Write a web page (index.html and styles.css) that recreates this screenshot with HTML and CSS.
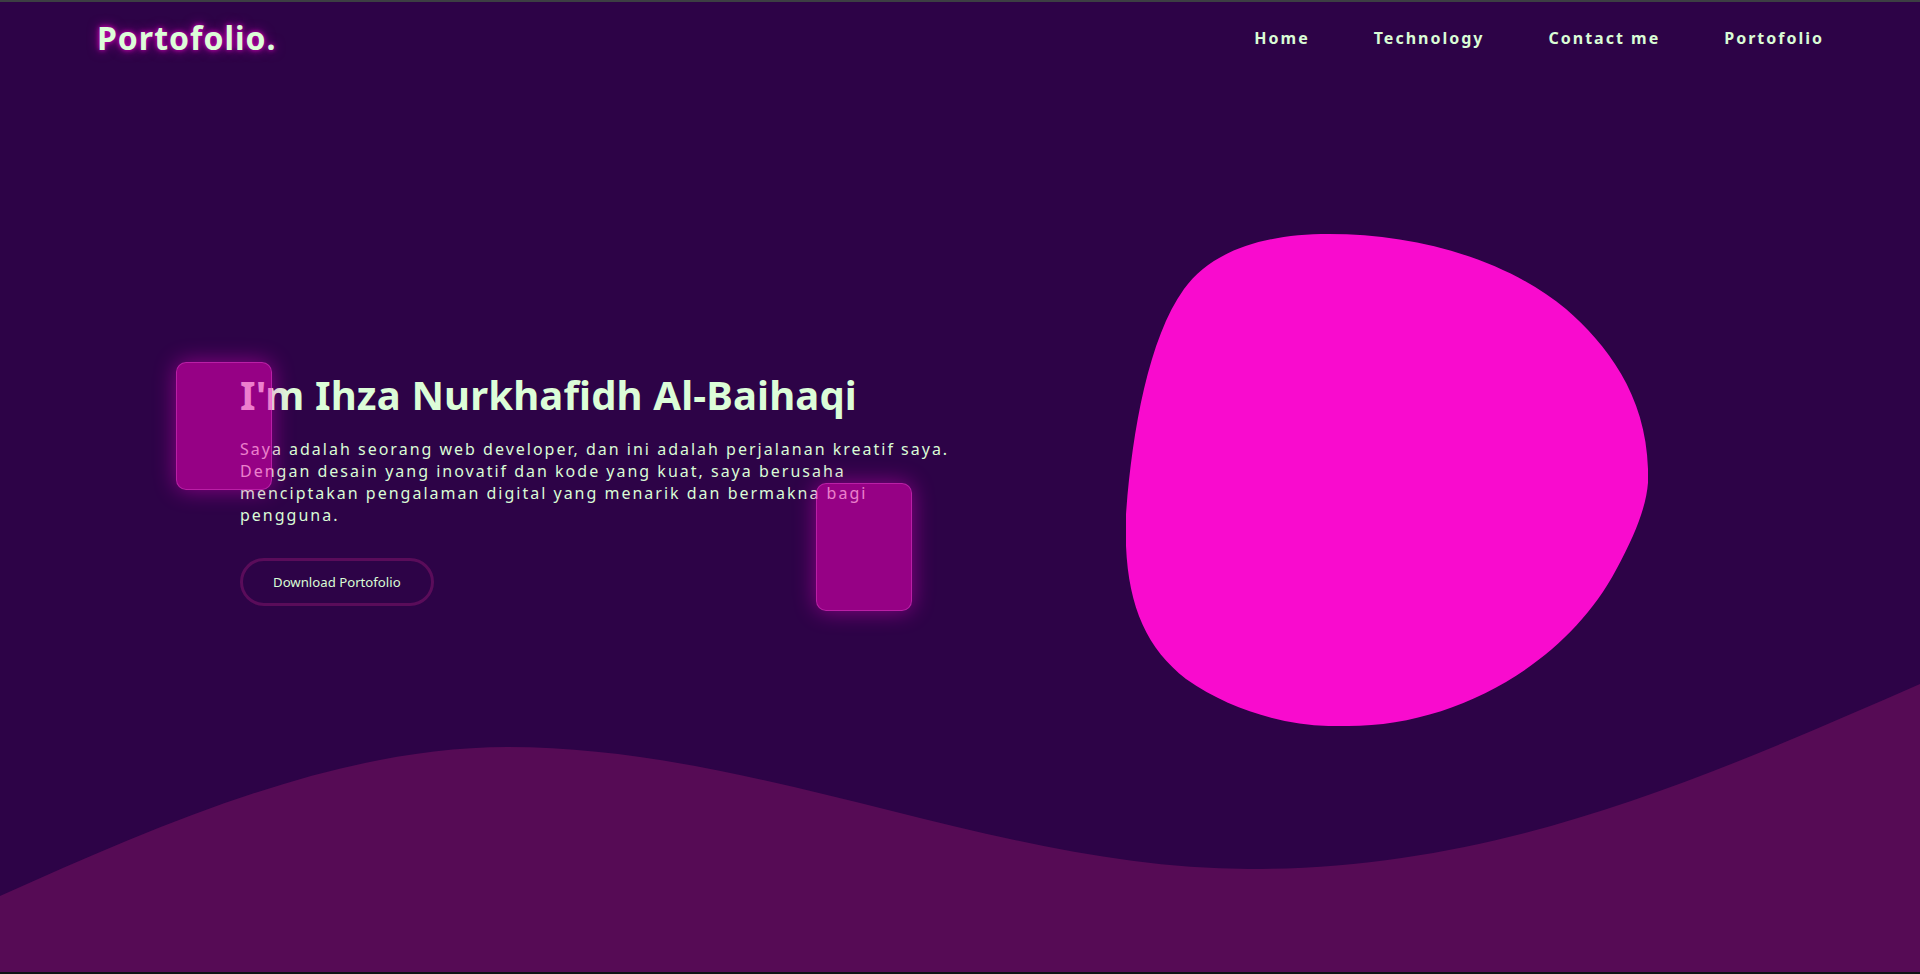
FILE: index.html
```
<!DOCTYPE html>
<html lang="id">
<head>
<meta charset="utf-8">
<title>Portofolio</title>
<link rel="stylesheet" href="styles.css">
</head>
<body>
<div class="page">
  <svg class="wave" viewBox="0 0 1920 292" preserveAspectRatio="none" aria-hidden="true">
    <path d="M0 216 C170 140 340 67 508 67 C760 67 1000 189 1249 189 C1500 189 1700 100 1920 4 L1920 292 L0 292 Z" fill="#560b55"/>
  </svg>
  <header class="header">
    <div class="logo">Portofolio.</div>
    <nav class="nav">
      <a href="#">Home</a>
      <a href="#">Technology</a>
      <a href="#">Contact me</a>
      <a href="#">Portofolio</a>
    </nav>
  </header>
  <section class="hero">
    <div class="hero-text">
      <div class="glass glass-a"></div>
      <div class="glass glass-b"></div>
      <h1 class="title">I'm Ihza Nurkhafidh Al-Baihaqi</h1>
      <p class="intro">Saya adalah seorang web developer, dan ini adalah perjalanan kreatif saya. Dengan desain yang inovatif dan kode yang kuat, saya berusaha menciptakan pengalaman digital yang menarik dan bermakna bagi pengguna.</p>
      <a class="btn" href="#">Download Portofolio</a>
    </div>
    <div class="hero-visual">
      <svg class="blob" viewBox="0 0 522 492" aria-hidden="true">
        <path d="M203 0 C135 0 85 18 58 55 C22 105 6 200 0 280 C-3 360 15 410 60 445 C110 480 170 494 222 492 C330 492 440 430 490 336 C515 290 524 260 522 235 C520 160 480 110 440 75 C380 25 290 0 203 0 Z" fill="#f90bce"/>
      </svg>
    </div>
  </section>
</div>
</body>
</html>
```
FILE: styles.css
```
html {
  background: #101215;
}
body {
  margin: 0;
  font-family: "Noto Sans", "Open Sans", sans-serif;
  color: #dafcd6;
}
.page {
  position: relative;
  height: 970px;
  border-top: 2px solid #3c3f43;
  background: #2d0347;
  overflow: hidden;
}
.wave {
  position: absolute;
  left: 0;
  bottom: 0;
  width: 100%;
  height: 292px;
  display: block;
}
.header {
  position: relative;
  display: flex;
  justify-content: space-between;
  align-items: center;
  padding: 12px 96px 0 97px;
  height: 48px;
}
.logo {
  font-size: 32px;
  line-height: 48px;
  font-weight: 700;
  letter-spacing: 1px;
  color: #dcfdd8;
  text-shadow: 0 0 5px #e000c0, 0 0 12px rgba(230, 0, 200, 0.6);
}
.nav {
  display: flex;
  gap: 64px;
}
.nav a {
  color: #dafcd6;
  text-decoration: none;
  font-size: 16px;
  line-height: 24px;
  font-weight: 700;
  letter-spacing: 2px;
}
.hero {
  position: relative;
  display: flex;
  align-items: flex-start;
  gap: 166px;
  padding: 172px 0 0 240px;
}
.hero-text {
  position: relative;
  width: 720px;
  margin-top: 137px;
  display: flex;
  flex-direction: column;
  align-items: flex-start;
}
.title {
  margin: 0 0 19px;
  font-size: 40px;
  line-height: 48px;
  font-weight: 700;
  letter-spacing: 0.15px;
  color: #dcfdd8;
}
.intro {
  margin: 0 0 32px;
  font-size: 16px;
  line-height: 22px;
  letter-spacing: 2px;
}
.btn {
  display: inline-block;
  padding: 0 30px;
  height: 42px;
  line-height: 42px;
  border: 3px solid #5a0c5a;
  border-radius: 24px;
  font-size: 13.2px;
  color: #dafcd6;
  text-decoration: none;
}
.glass {
  position: absolute;
  z-index: 2;
  width: 96px;
  height: 128px;
  box-sizing: border-box;
  border-radius: 10px;
  background: rgba(255, 0, 195, 0.5);
  border: 1px solid rgba(255, 90, 230, 0.35);
  box-shadow: 0 0 22px rgba(255, 0, 210, 0.45);
}
.glass-a {
  left: -64px;
  top: -9px;
}
.glass-b {
  left: 576px;
  top: 112px;
}
.hero-visual {
  display: flex;
}
.blob {
  display: block;
  width: 522px;
  height: 492px;
}
```
